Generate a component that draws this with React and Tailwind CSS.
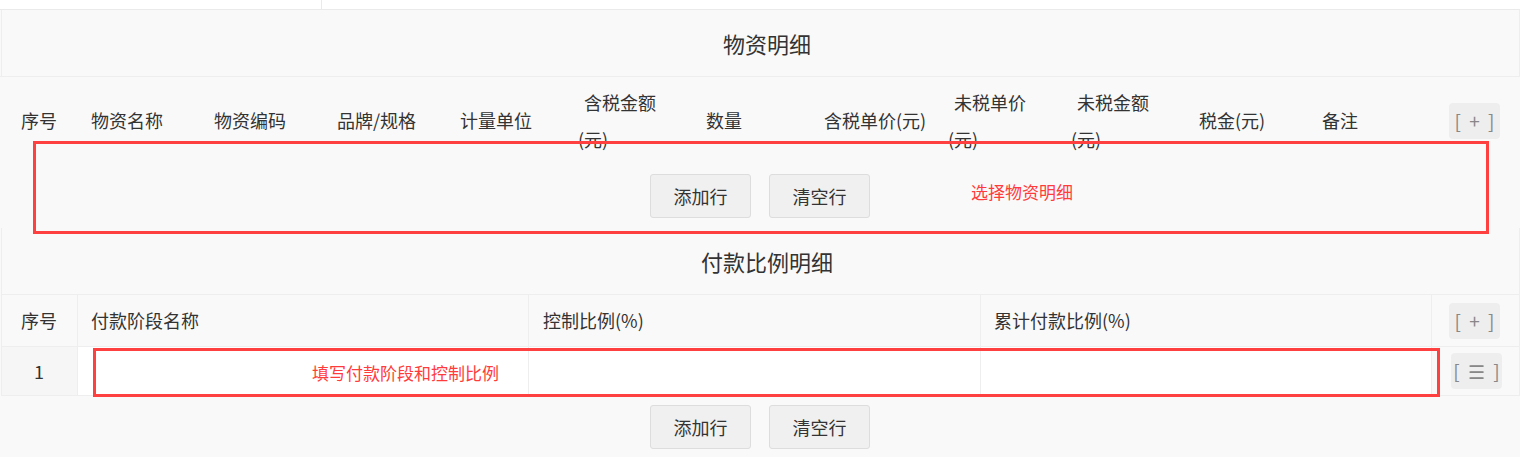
import React from 'react';

const font = "font-['Microsoft_YaHei','Noto_Sans_CJK_SC',sans-serif]";

const goodsHeads = [
  { label: '物资名称', w: 'w-[123px]', pl: 'pl-[14px]' },
  { label: '物资编码', w: 'w-[123px]', pl: 'pl-[14px]' },
  { label: '品牌/规格', w: 'w-[123px]', pl: 'pl-[14px]' },
  { label: '计量单位', w: 'w-[123px]', pl: 'pl-[14px]' },
  { label: '含税金额', wrap: true, w: 'w-[123px]', pl: 'pl-[9px]' },
  { label: '数量', w: 'w-[124px]', pl: 'pl-[14px]' },
  { label: '含税单价(元)', w: 'w-[123px]', pl: 'pl-[8px]' },
  { label: '未税单价', wrap: true, w: 'w-[123px]', pl: 'pl-[9px]' },
  { label: '未税金额', wrap: true, w: 'w-[123px]', pl: 'pl-[9px]' },
  { label: '税金(元)', w: 'w-[123px]', pl: 'pl-[14px]' },
  { label: '备注', w: 'w-[124px]', pl: 'pl-[14px]' },
];

const SmallBtn = ({ children }) => (
  <button className="w-[51px] h-[36px] rounded-[4px] bg-[#eeeeee] text-[#888] text-[19px] leading-[36px] tracking-[2px] pl-[2px]">
    {children}
  </button>
);

const RowButtons = () => (
  <div className="flex justify-center gap-[18px]">
    <button className="w-[101px] h-[44px] rounded-[3px] border border-[#dddddd] bg-[#f0f0f0] text-[18px] text-[#333]">添加行</button>
    <button className="w-[101px] h-[44px] rounded-[3px] border border-[#dddddd] bg-[#f0f0f0] text-[18px] text-[#333]">清空行</button>
  </div>
);

const App = () => {
  return (
    <div className={`relative w-[1520px] h-[457px] overflow-hidden bg-[#f9f9f9] text-[#333] ${font}`}>
      {/* top strip left over from the section above */}
      <div className="flex h-[10px] bg-white border-b border-[#eaeaea]">
        <div className="w-[322px] border-r border-[#eaeaea]" />
        <div className="flex-1" />
      </div>

      {/* 物资明细 */}
      <div className="h-[66px] ml-[1px] w-[1519px] border-l border-r border-[#eeeeee] flex items-center justify-center pl-[13px] text-[22px]">
        物资明细
      </div>
      <div className="flex items-center h-[92px] pb-[4px] border-t border-[#eeeeee] text-[18px]">
        <div className="w-[77px] pl-[21px]">序号</div>
        {goodsHeads.map((h) =>
          h.wrap ? (
            <div key={h.label} className={`${h.w} ${h.pl} leading-[37px]`}>
              <span className="pl-[6px]">{h.label}</span>
              <br />
              (元)
            </div>
          ) : (
            <div key={h.label} className={`${h.w} ${h.pl} whitespace-nowrap`}>{h.label}</div>
          )
        )}
        <div className="flex-1 flex pl-[17px]">
          <SmallBtn>[ + ]</SmallBtn>
        </div>
      </div>
      <div className="h-[60px] pt-[6px]">
        <RowButtons />
      </div>

      {/* 付款比例明细 */}
      <div className="ml-[1px] w-[1519px] border-l border-r border-[#eeeeee]">
        <div className="h-[66px] flex items-center justify-center pl-[13px] text-[22px]">付款比例明细</div>
        <div className="flex h-[52px] border-t border-[#eeeeee] text-[18px]">
          <div className="w-[76px] flex items-center pl-[19px] border-r border-[#eeeeee]">序号</div>
          <div className="w-[451px] flex items-center pl-[13px] border-r border-[#eeeeee]">付款阶段名称</div>
          <div className="w-[452px] flex items-center pl-[14px] border-r border-[#eeeeee]">控制比例(%)</div>
          <div className="w-[451px] flex items-center pl-[13px] border-r border-[#eeeeee]">累计付款比例(%)</div>
          <div className="flex-1 flex items-center pl-[17px]">
            <SmallBtn>[ + ]</SmallBtn>
          </div>
        </div>
        <div className="flex h-[50px] border-t border-b border-[#eeeeee] text-[18px]">
          <div className="w-[76px] flex items-center justify-center pr-[1px] bg-[#f6f6f6] border-r border-[#eeeeee]">1</div>
          <div className="w-[451px] bg-white border-r border-[#eeeeee]" />
          <div className="w-[452px] bg-white border-r border-[#eeeeee]" />
          <div className="w-[451px] bg-white border-r border-[#eeeeee]" />
          <div className="flex-1 flex items-center pl-[19px]">
            <SmallBtn>[ ☰ ]</SmallBtn>
          </div>
        </div>
      </div>
      <div className="pt-[9px]">
        <RowButtons />
      </div>

      {/* red annotations drawn over the form */}
      <div className="absolute left-[33px] top-[141px] w-[1456px] h-[93px] border-[3px] border-[#ff4040]" />
      <div className="absolute left-[971px] top-[181px] text-[17px] leading-[22px] text-[#ff3b3b]">选择物资明细</div>
      <div className="absolute left-[93px] top-[348px] w-[1347px] h-[49px] border-[3px] border-[#ff4040]" />
      <div className="absolute left-[312px] top-[362px] text-[17px] leading-[22px] text-[#ff3b3b]">填写付款阶段和控制比例</div>
    </div>
  );
};

export default App;
